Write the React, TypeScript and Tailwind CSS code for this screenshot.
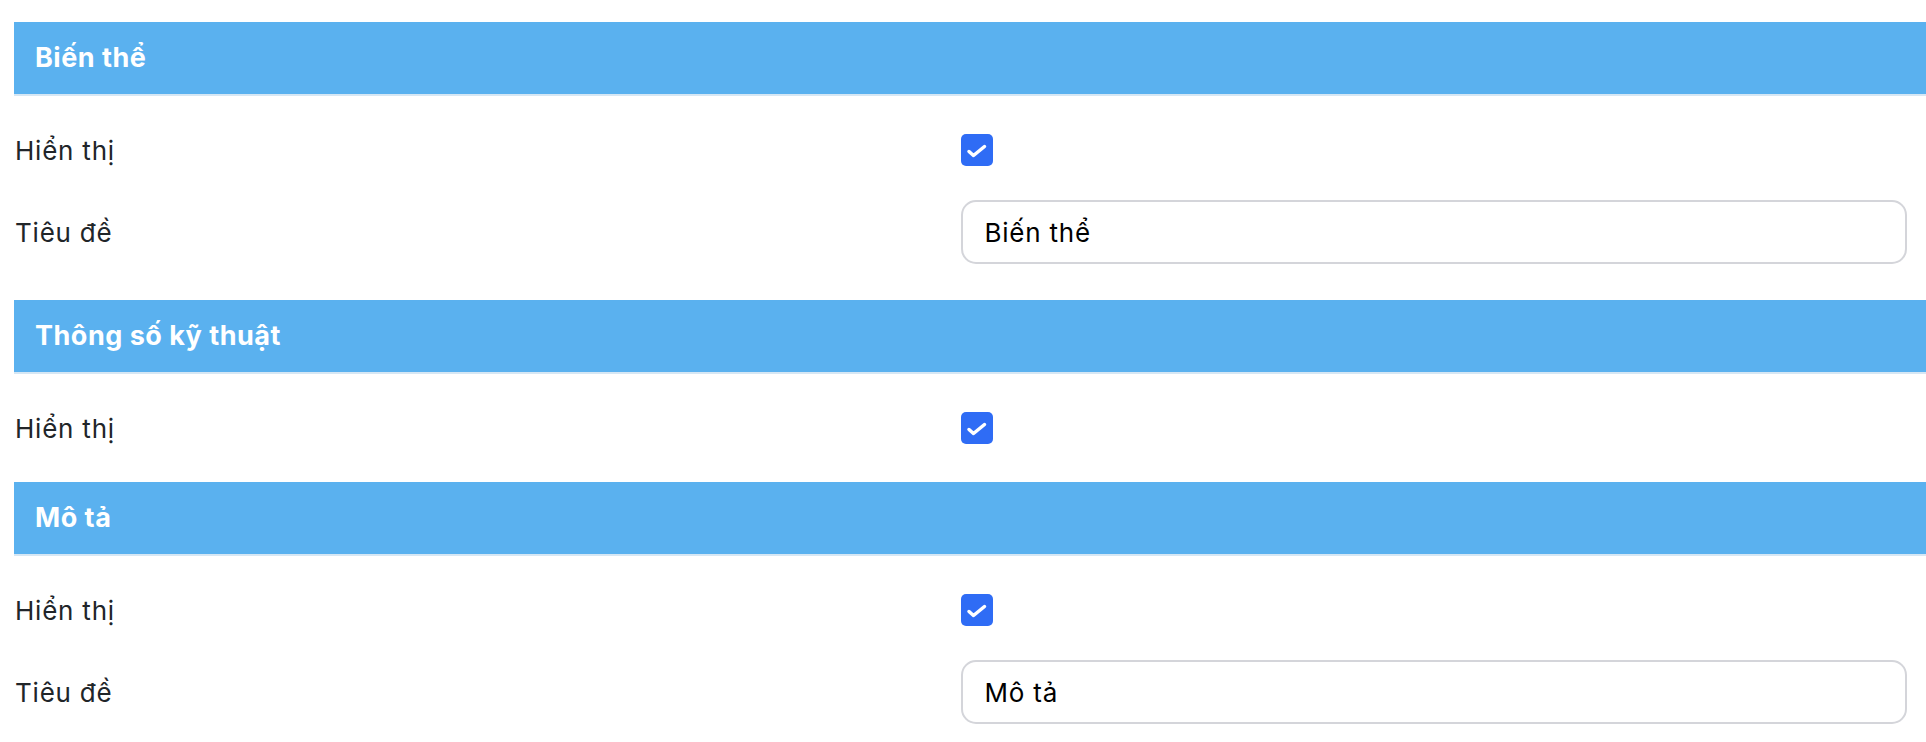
import { useState } from 'react';

function SectionHeader({ title }: { title: string }) {
  return (
    <div className="h-[74px] bg-[#5ab1ef] border-b-2 border-[#d6e7f4] flex items-center pl-[21px]">
      <span className="text-[27px] font-bold text-white leading-none tracking-[0.5px] pb-[2px]">{title}</span>
    </div>
  );
}

function CheckboxRow({ label }: { label: string }) {
  const [checked, setChecked] = useState(true);
  return (
    <div className="grid grid-cols-2 h-[64px] items-center pr-[19px]">
      <span className="pl-px text-[26px] tracking-[0.03em] text-[#212529]">{label}</span>
      <button
        onClick={() => setChecked(!checked)}
        className={`w-[32px] h-[32px] rounded-[5px] flex items-center justify-center ${checked ? 'bg-[#2f6cf5]' : 'bg-white border-2 border-gray-300'}`}
      >
        {checked && (
          <svg width="32" height="32" viewBox="0 0 32 32" fill="none" stroke="white" strokeWidth="3.5" strokeLinecap="round" strokeLinejoin="round">
            <polyline points="8 17.5 12.5 21.5 23.5 12.5" />
          </svg>
        )}
      </button>
    </div>
  );
}

function InputRow({ label, value }: { label: string; value: string }) {
  const [text, setText] = useState(value);
  return (
    <div className="grid grid-cols-2 h-[64px] items-center pr-[19px]">
      <span className="pl-px text-[26px] tracking-[0.03em] text-[#212529]">{label}</span>
      <input
        value={text}
        onChange={(e) => setText(e.target.value)}
        className="h-[64px] w-full rounded-[15px] border-2 border-[#d4d5da] px-[22px] text-[26px] tracking-[0.03em] text-black outline-none"
      />
    </div>
  );
}

export default function App() {
  return (
    <div className="min-h-screen bg-white pt-[22px] pl-[14px] font-['Inter','Noto_Sans',sans-serif]">
      <SectionHeader title="Biến thể" />
      <div className="pt-[22px] pb-[36px] flex flex-col gap-[18px]">
        <CheckboxRow label="Hiển thị" />
        <InputRow label="Tiêu đề" value="Biến thể" />
      </div>

      <SectionHeader title="Thông số kỹ thuật" />
      <div className="pt-[22px] pb-[22px] flex flex-col gap-[18px]">
        <CheckboxRow label="Hiển thị" />
      </div>

      <SectionHeader title="Mô tả" />
      <div className="pt-[22px] pb-[20px] flex flex-col gap-[18px]">
        <CheckboxRow label="Hiển thị" />
        <InputRow label="Tiêu đề" value="Mô tả" />
      </div>
    </div>
  );
}
